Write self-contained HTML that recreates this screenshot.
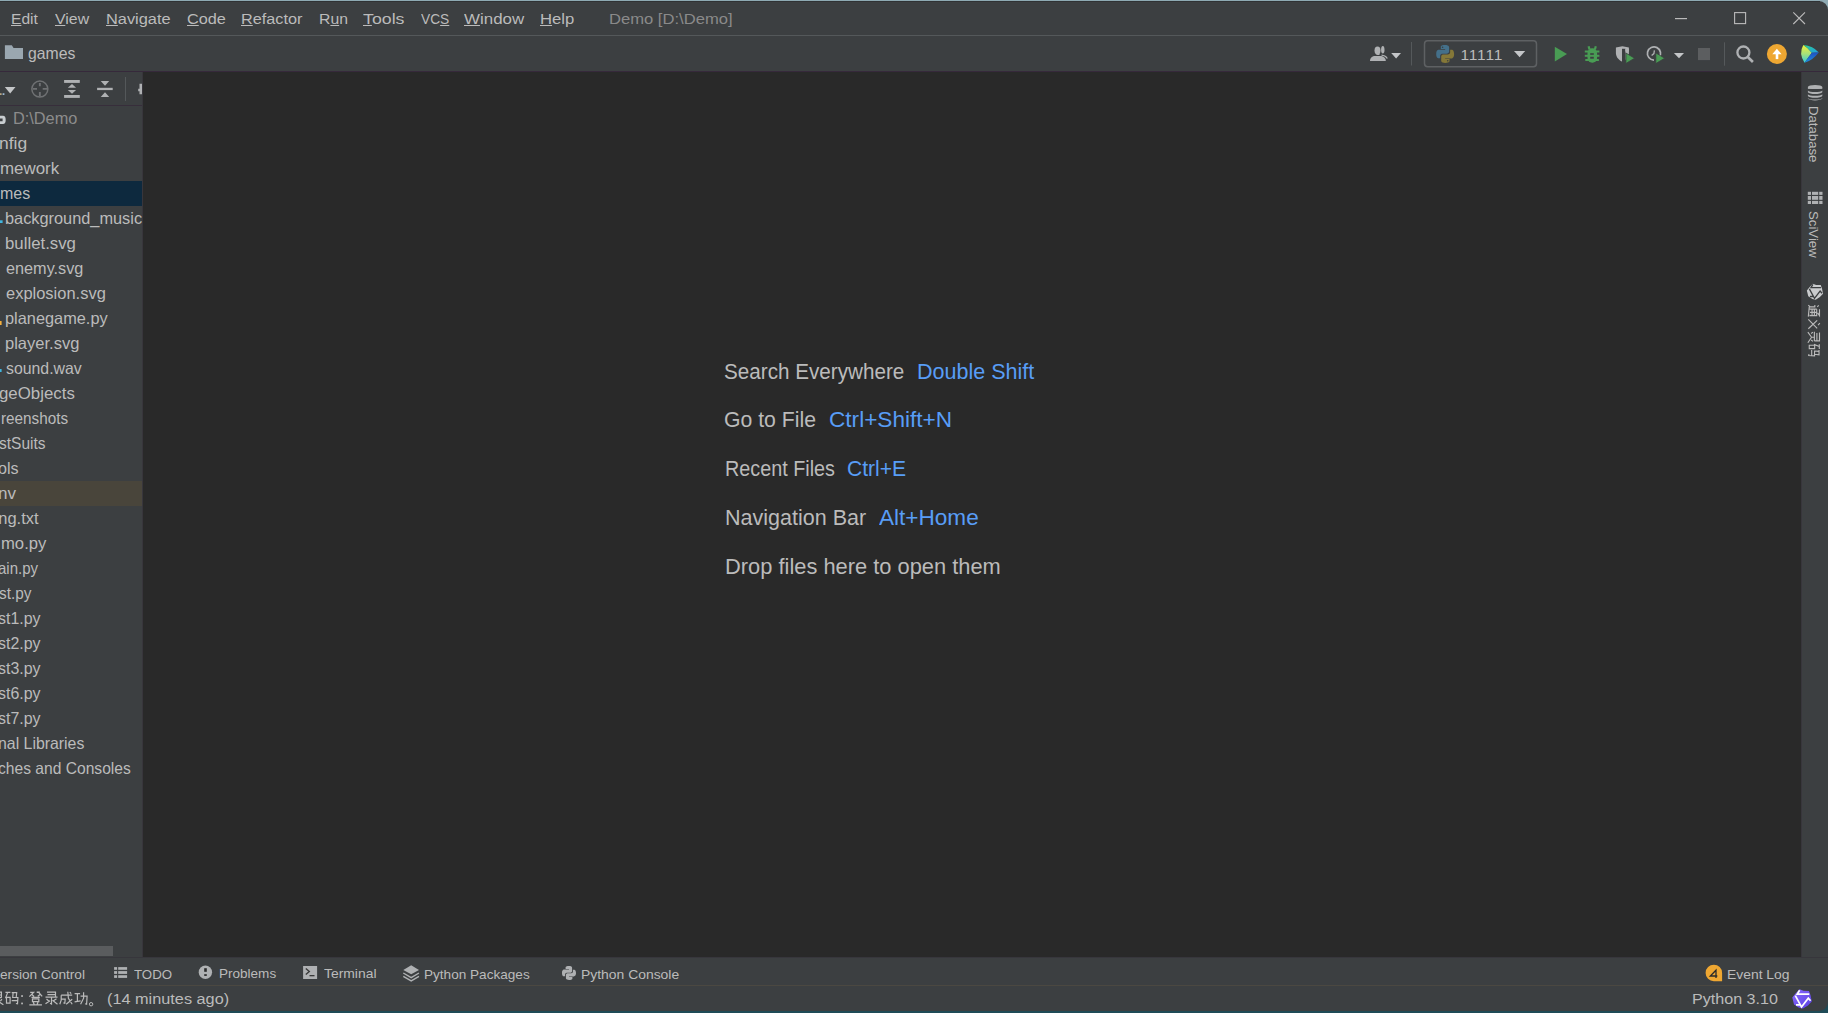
<!DOCTYPE html>
<html><head><meta charset="utf-8"><style>
html,body{margin:0;padding:0;width:1828px;height:1013px;overflow:hidden;background:#3C3F41;}
.r{position:absolute;}
.t{position:absolute;white-space:pre;font-family:"Liberation Sans", sans-serif;transform-origin:0 0;}
u{text-decoration:underline;text-underline-offset:1px;}
</style></head><body>
<div class="r" style="left:0px;top:0px;width:1828px;height:1013px;background:linear-gradient(#8EAAB3 0,#8EAAB3 50%,#1F4B57 50%,#1F4B57 100%);"></div>
<div class="r" style="left:0px;top:1px;width:1828px;height:1010px;background:#3C3F41;border-top-right-radius:9px;border-bottom-right-radius:9px;"></div>
<div class="r" style="left:0px;top:1011px;width:1828px;height:2px;background:#1F4B57;"></div>
<div class="r" style="left:0px;top:1px;width:1820px;height:1px;background:#303234;"></div>
<div class="r" style="left:0px;top:35px;width:1828px;height:1px;background:#54585A;"></div>
<div class="r" style="left:0px;top:71px;width:1828px;height:1px;background:#36293B;"></div>
<div class="r" style="left:143px;top:72px;width:1658px;height:885px;background:#292929;"></div>
<div class="r" style="left:142px;top:72px;width:1px;height:885px;background:#38363C;"></div>
<div class="r" style="left:1801px;top:72px;width:1px;height:885px;background:#38363C;"></div>
<div class="r" style="left:0px;top:105px;width:142px;height:1px;background:#372E3B;"></div>
<div class="r" style="left:125px;top:77px;width:1px;height:24px;background:#54585A;"></div>
<div class="r" style="left:0px;top:181px;width:142px;height:25px;background:#0D293E;"></div>
<div class="r" style="left:0px;top:481px;width:142px;height:25px;background:#49453B;"></div>
<div class="r" style="left:0px;top:946px;width:113px;height:10px;background:#5A5C5E;"></div>
<div class="r" style="left:0px;top:957px;width:1828px;height:1px;background:#37363C;"></div>
<div class="r" style="left:0px;top:985px;width:1828px;height:1px;background:#4B4841;"></div>
<svg class="r" style="left:0;top:0" width="1828" height="1013" viewBox="0 0 1828 1013"><ellipse cx="1377.5" cy="50.5" rx="3" ry="4.1" fill="#AFB1B3"/><path d="M1370 61 C1370 57.5 1372.5 56 1375 56 H1380 C1383 56 1385.8 57.5 1385.8 61 Z" fill="#AFB1B3"/><path d="M1375.5 55 L1379.5 55 L1379.5 53 Z" fill="#AFB1B3"/><ellipse cx="1382.8" cy="49.8" rx="1.7" ry="3.8" fill="#AFB1B3"/><path d="M1381.5 54.5 C1384 55 1387.5 56 1387.8 58.5 L1386.3 58.5 C1385.5 56.8 1383.5 56.2 1381.5 55.8 Z" fill="#AFB1B3"/><path d="M1391.2 53 H1401 L1396.1 58.4 Z" fill="#C4C6C8"/><rect x="1411" y="42" width="1" height="23.5" fill="#55595B"/><rect x="1724" y="42.3" width="1" height="23.4" fill="#55595B"/><rect x="1424.5" y="40.8" width="112" height="26" rx="3.2" fill="none" stroke="#5E6163" stroke-width="1.5"/><g transform="translate(1436.2 45.1) scale(1.28)"><path d="M6.9 0 C3.4 0 3.6 1.5 3.6 1.5 V3.1 H7 V3.6 H2.2 C2.2 3.6 0 3.4 0 6.9 C0 10.4 1.9 10.3 1.9 10.3 H3.1 V8.6 C3.1 8.6 3 6.7 5 6.7 H8.3 C8.3 6.7 10.1 6.7 10.1 4.9 V1.9 C10.1 1.9 10.4 0 6.9 0Z" fill="#44708A"/><circle cx="5" cy="1.7" r="0.6" fill="#3C3F41"/><g transform="rotate(180 7 7)"><path d="M6.9 0 C3.4 0 3.6 1.5 3.6 1.5 V3.1 H7 V3.6 H2.2 C2.2 3.6 0 3.4 0 6.9 C0 10.4 1.9 10.3 1.9 10.3 H3.1 V8.6 C3.1 8.6 3 6.7 5 6.7 H8.3 C8.3 6.7 10.1 6.7 10.1 4.9 V1.9 C10.1 1.9 10.4 0 6.9 0Z" fill="#857838"/><circle cx="5" cy="1.7" r="0.6" fill="#3C3F41"/></g></g><path d="M1514 51 H1525.2 L1519.6 57.3 Z" fill="#C4C6C8"/><path d="M1554.8 46.8 L1567 54.1 L1554.8 61.4 Z" fill="#499C54"/><g fill="#499C54" stroke="none"><rect x="1587.5" y="48.3" width="9.6" height="14.4" rx="4.6"/><rect x="1584.8" y="50.5" width="14.6" height="2"/><rect x="1584.8" y="54.8" width="14.6" height="2"/><rect x="1585.3" y="59" width="13.6" height="2"/></g><path d="M1589.5 49.5 L1588.6 46.2 M1594.9 49.5 L1595.8 46.2" stroke="#499C54" stroke-width="2.2"/><rect x="1590.2" y="53.2" width="3.6" height="1.6" fill="#3C3F41"/><rect x="1590.2" y="56.8" width="3.6" height="1.9" fill="#3C3F41"/><path d="M1615.9 47.5 L1622.4 46.3 L1628.9 47.5 V53 C1628.9 57.5 1625.5 60.5 1622.4 61.7 C1619.3 60.5 1615.9 57.5 1615.9 53 Z" fill="#AFB1B3"/><path d="M1622 48.8 H1625.5 V62 H1622 Z" fill="#3C3F41"/><path d="M1625.3 49 H1628.9 V51.6 H1625.3Z" fill="#AFB1B3"/><path d="M1625.9 53 L1634.6 58.2 L1625.9 63.5 Z" fill="#499C54" stroke="#3C3F41" stroke-width="0.8"/><path d="M1659 57.8 A6.6 6.6 0 1 0 1654 60.1" fill="none" stroke="#AFB1B3" stroke-width="1.7"/><path d="M1654.4 50.3 L1653.9 53.6 L1651.6 55.6" fill="none" stroke="#AFB1B3" stroke-width="1.3"/><path d="M1655.8 52.9 L1664.7 58.2 L1655.8 63.6 Z" fill="#499C54" stroke="#3C3F41" stroke-width="0.8"/><path d="M1673.9 53 H1684 L1679 58.2 Z" fill="#C4C6C8"/><rect x="1698" y="48" width="12" height="12.1" fill="#5C5E60"/><circle cx="1743.4" cy="52.5" r="6" fill="none" stroke="#AFB1B3" stroke-width="2.3"/><path d="M1747.6 56.8 L1752.9 62" stroke="#AFB1B3" stroke-width="2.6"/><circle cx="1776.9" cy="54" r="10" fill="#EEA732"/><path d="M1772.3 54.3 L1776.9 48.7 L1781.6 54.3 Z" fill="#FFFFFF"/><rect x="1775.7" y="54" width="2.6" height="5.1" fill="#FFFFFF"/><defs><linearGradient id="gl" x1="0" y1="0" x2="0" y2="1"><stop offset="0" stop-color="#F0F038"/><stop offset="0.5" stop-color="#A6E07A"/><stop offset="1" stop-color="#2FCDE0"/></linearGradient><linearGradient id="gt" x1="0" y1="0" x2="1" y2="1"><stop offset="0" stop-color="#2ED38A"/><stop offset="1" stop-color="#1E9BE8"/></linearGradient><linearGradient id="gb" x1="0" y1="0" x2="0" y2="1"><stop offset="0" stop-color="#2050C0"/><stop offset="1" stop-color="#1C8FE0"/></linearGradient><linearGradient id="gp" x1="0" y1="0" x2="1" y2="1"><stop offset="0" stop-color="#8A6BFF"/><stop offset="1" stop-color="#5A3FE0"/></linearGradient></defs><g transform="translate(1798 40)"><path d="M5.3 5 Q0.4 13.5 6.5 22.8 Q10.5 17 13.8 12.8 Q10.5 8 5.3 5Z" fill="url(#gl)"/><path d="M5.3 5 Q15 5.6 20.8 12.6 L13.8 12.8 Q10.5 8 5.3 5Z" fill="url(#gt)"/><path d="M20.8 12.6 Q14 21.1 6.5 22.8 Q10.5 17 13.8 12.8Z" fill="url(#gb)"/></g><rect x="1675" y="18" width="12" height="1.2" fill="#BBBBBB"/><rect x="1734.6" y="12.6" width="11" height="11" fill="none" stroke="#BBBBBB" stroke-width="1.1"/><path d="M1793.3 12.3 L1805 24 M1805 12.3 L1793.3 24" stroke="#BBBBBB" stroke-width="1.1"/><path d="M4.9 45.2 H11.8 L13.6 47.9 H23 V59.1 H4.9 Z" fill="#9AA7B0"/><rect x="0" y="93.3" width="1.6" height="1.6" fill="#C9B48A"/><rect x="2.6" y="93.3" width="1.8" height="1.6" fill="#A9C6E0"/><path d="M4.8 87 H15.5 L10.15 93.4 Z" fill="#C4C6C8"/><circle cx="39.85" cy="89.1" r="8" fill="none" stroke="#6F7173" stroke-width="1.5"/><path d="M39.85 82.9 V86.3 M39.85 91.9 V96.5 M32.9 88.9 H37 M42.7 88.9 H48" stroke="#6F7173" stroke-width="1.9"/><g fill="#AFB1B3"><rect x="64.1" y="80" width="15.7" height="2.9"/><rect x="64.1" y="95" width="15.7" height="2.9"/><path d="M67.8 87.8 L72 84.1 L76.1 87.8Z"/><path d="M67.8 89.9 H76.1 L72 93.8Z"/><path d="M100.7 80.9 H109.2 L105 85.8Z"/><rect x="97.1" y="87.8" width="15.6" height="2.3"/><path d="M100.7 97 H109.2 L105 92.2Z"/></g><path d="M139.5 83.8 H142 V94.2 H139.5 V91.2 H138.2 V88.8 H139.5 Z" fill="#AFB1B3"/><path d="M0 115.8 H3 A2.7 4.1 0 0 1 3 124 H0 V121.3 H2.6 V118.4 H0 Z" fill="#C8CDD0"/><rect x="0" y="220.3" width="2.6" height="2.7" fill="#40B6E0"/><rect x="0" y="321" width="1.6" height="4" fill="#F4AF3D"/><rect x="0" y="369" width="1.6" height="3" fill="#40B6E0"/><g fill="#AFB1B3"><ellipse cx="1815.1" cy="87" rx="7.2" ry="2"/><rect x="1807.9" y="87" width="14.4" height="1.9" /><path d="M1807.9 90.4 C1809 92.6 1821 92.6 1822.3 90.4 V92.2 C1821 94.6 1809 94.6 1807.9 92.2Z"/><path d="M1807.9 94.2 C1809 96.4 1821 96.4 1822.3 94.2 V96 C1821 98.4 1809 98.4 1807.9 96Z"/><path d="M1807.9 97.9 C1809 100.1 1821 100.1 1822.3 97.9 V98.6 C1821 101 1809 101 1807.9 98.6Z"/></g><g fill="#AFB1B3"><rect x="1807.8" y="191.8" width="3.2" height="3.1"/><rect x="1812" y="191.8" width="6.2" height="3.1"/><rect x="1819.2" y="191.8" width="3.3" height="3.1"/><rect x="1807.8" y="196" width="3.2" height="3.8"/><rect x="1812" y="196" width="6.2" height="3.8"/><rect x="1819.2" y="196" width="3.3" height="3.8"/><rect x="1807.8" y="200.9" width="3.2" height="3.1"/><rect x="1812" y="200.9" width="6.2" height="3.1"/><rect x="1819.2" y="200.9" width="3.3" height="3.1"/></g><g fill="#AFB1B3"><rect x="114.1" y="967.1" width="3" height="2.7"/><rect x="118.2" y="967.1" width="8.9" height="2.7"/><rect x="114.1" y="971.1" width="3" height="2.8"/><rect x="118.2" y="971.1" width="8.9" height="2.8"/><rect x="114.1" y="975.2" width="3" height="2.7"/><rect x="118.2" y="975.2" width="8.9" height="2.7"/></g><circle cx="205.4" cy="972.3" r="6.7" fill="#AFB1B3"/><rect x="204.2" y="968.2" width="2.6" height="3.6" fill="#2B2B2B"/><rect x="204.2" y="974.2" width="2.6" height="1.7" fill="#2B2B2B"/><rect x="303.1" y="966" width="14" height="13" fill="#AFB1B3"/><path d="M305.8 968.5 L309.3 971.5 L305.8 974.5" fill="none" stroke="#3A3A3A" stroke-width="1.4"/><rect x="309.5" y="975" width="5" height="1.3" fill="#3A3A3A"/><path d="M403.3 970 L411.2 965.3 L419 970 L411.2 974.3 Z" fill="#AFB1B3"/><path d="M403.3 973 L411.2 977.6 L419 973" fill="none" stroke="#AFB1B3" stroke-width="1.4"/><path d="M403.3 976.4 L411.2 980.9 L419 976.4" fill="none" stroke="#AFB1B3" stroke-width="1.4"/><g transform="translate(562 966) scale(1.0)"><path d="M6.9 0 C3.4 0 3.6 1.5 3.6 1.5 V3.1 H7 V3.6 H2.2 C2.2 3.6 0 3.4 0 6.9 C0 10.4 1.9 10.3 1.9 10.3 H3.1 V8.6 C3.1 8.6 3 6.7 5 6.7 H8.3 C8.3 6.7 10.1 6.7 10.1 4.9 V1.9 C10.1 1.9 10.4 0 6.9 0Z" fill="#AFB1B3"/><g transform="rotate(180 7 7)"><path d="M6.9 0 C3.4 0 3.6 1.5 3.6 1.5 V3.1 H7 V3.6 H2.2 C2.2 3.6 0 3.4 0 6.9 C0 10.4 1.9 10.3 1.9 10.3 H3.1 V8.6 C3.1 8.6 3 6.7 5 6.7 H8.3 C8.3 6.7 10.1 6.7 10.1 4.9 V1.9 C10.1 1.9 10.4 0 6.9 0Z" fill="#AFB1B3"/></g></g><path d="M1722.1 972.95 A8.25 8.25 0 1 0 1713.85 981.2 H1722.1 Z" fill="#EFA732"/><path d="M1716 978 V970.2 L1710.3 976 H1717.3" fill="none" stroke="#2B2B2B" stroke-width="1.3"/><g transform="translate(1792 989)"><path d="M7.5 0.3 L11.5 1.8 L17 2 L18.6 6.5 L19.8 12.5 L16 16.5 L11 19.6 L7 18.8 L2 15.5 L0.3 8.5 L3.5 4.5 Z" fill="url(#gp)"/><path d="M7.6 1.2 L5.3 5.1 H17.3 M3.3 6.6 L9.5 18 L16.3 9.2 L18.6 11.8 M4 15.8 H8.8" fill="none" stroke="#FFFFFF" stroke-width="1.7"/></g><g transform="translate(1806.6 283.4) scale(0.83)"><path d="M7.5 0.3 L11.5 1.8 L17 2 L18.6 6.5 L19.8 12.5 L16 16.5 L11 19.6 L7 18.8 L2 15.5 L0.3 8.5 L3.5 4.5 Z" fill="#C9CBCD"/><path d="M7.6 1.2 L5.3 5.1 H17.3 M3.3 6.6 L9.5 18 L16.3 9.2 L18.6 11.8 M4 15.8 H8.8" fill="none" stroke="#3C3F41" stroke-width="1.6"/></g></svg>
<svg class="r" style="left:0;top:985px" width="110" height="26" viewBox="0 985 110 26"><path transform="translate(-9.6 991.2)" d="M2 1H11V6.5M2.5 3.8H11M1 6.5H11M1.5 8L3 10M11.5 8L10 10M7 7V9.5L1.5 13.5M7 9.5L13 13.5" fill="none" stroke="#BBBBBB" stroke-width="1.2"/><path transform="translate(4.9 991.2)" d="M0.5 1.2H5.5M2.8 1.2L0.6 7M1.6 6.2H5.2V12H1.6ZM6.8 1.5H11.8L11.3 6.3M8.2 1.5L7.8 6.3H13L12.6 12.6L11 12.3M6.8 9.4H12.4" fill="none" stroke="#BBBBBB" stroke-width="1.2"/><rect x="21.2" y="995.2" width="1.7" height="1.7" fill="#BBBBBB"/><rect x="21.2" y="1002.6" width="1.7" height="1.7" fill="#BBBBBB"/><path transform="translate(28.3 991.2) scale(1.05)" d="M1.8 1.2H5L1 5.2M3.2 3L5.5 5M8 1H11M9.5 0.6L13.2 5M11.5 2.8L9 4.8M3 5.8H11M4 7.2H10V10H4ZM1 13H13M4.8 10.6L5.6 12.6M9.2 10.6L8.4 12.6" fill="none" stroke="#BBBBBB" stroke-width="1.2"/><path transform="translate(44.5 991.2)" d="M2.5 1H11V6M3 3.5H11M1 6H13M7 6V12.8L5.5 12M2 7.8L4.5 10M12 7.5L9 9.5M1 12.5L5.5 9.5M8 9L13 13" fill="none" stroke="#BBBBBB" stroke-width="1.2"/><path transform="translate(59.2 991.2)" d="M2 4H13M2 4V9L0.6 13M2 8H6L5.6 12L4.2 11.6M8.6 0.6L9.2 7L13 13M13 8L7 13M10.6 1L12 2.4" fill="none" stroke="#BBBBBB" stroke-width="1.2"/><path transform="translate(74.1 991.2)" d="M0.5 2.5H6M3.3 2.5V10M0.5 10.6L6.5 9.6M6.5 5H13L12.5 13L11 12.5M9.5 1V7L6.5 13" fill="none" stroke="#BBBBBB" stroke-width="1.2"/><circle cx="91.1" cy="1004.2" r="1.7" fill="none" stroke="#BBBBBB" stroke-width="1"/></svg>
<svg class="r" style="left:1800px;top:300px" width="28" height="62" viewBox="1800 300 28 62"><path transform="translate(1807.4 304.5) scale(0.93) rotate(90 7 7)" d="M1 1.8L2.6 3.4M0.5 6H2.6V11L0.6 13M2.6 12L13 13M5 1H12L9 3M5 4H12V11.2H11M5 4V11.6M5 6.5H12M5 9H12M8.5 4V11.2" fill="none" stroke="#BBBBBB" stroke-width="1.2"/><path transform="translate(1807.4 317.6) scale(0.93) rotate(90 7 7)" d="M6 0.6L8 2.5M3 3.5L12 13M11.5 3.5L2 13" fill="none" stroke="#BBBBBB" stroke-width="1.2"/><path transform="translate(1807.4 330.7) scale(0.93) rotate(90 7 7)" d="M2 1H11V6.5M2.5 3.8H11M1 6.5H11M1.5 8L3 10M11.5 8L10 10M7 7V9.5L1.5 13.5M7 9.5L13 13.5" fill="none" stroke="#BBBBBB" stroke-width="1.2"/><path transform="translate(1807.4 343.8) scale(0.93) rotate(90 7 7)" d="M0.5 1.2H5.5M2.8 1.2L0.6 7M1.6 6.2H5.2V12H1.6ZM6.8 1.5H11.8L11.3 6.3M8.2 1.5L7.8 6.3H13L12.6 12.6L11 12.3M6.8 9.4H12.4" fill="none" stroke="#BBBBBB" stroke-width="1.2"/></svg>
<div id="texts"><div class="r" id="treebox" style="left:0;top:0;width:142px;height:957px;overflow:hidden">
<div class="t" id="tr0" style="left:12.77px;top:110.03px;font-size:16.5px;line-height:16.5px;color:#8C8C8C;transform:scaleX(0.9878);">D:\Demo</div>
<div class="t" id="tr1" style="left:-0.85px;top:135.03px;font-size:16.5px;line-height:16.5px;color:#BBBBBB;transform:scaleX(1.0576);">nfig</div>
<div class="t" id="tr2" style="left:0.07px;top:160.03px;font-size:16.5px;line-height:16.5px;color:#BBBBBB;transform:scaleX(1.0251);">mework</div>
<div class="t" id="tr3" style="left:0.04px;top:185.03px;font-size:16.5px;line-height:16.5px;color:#BBBBBB;transform:scaleX(0.9691);">mes</div>
<div class="t" id="tr4" style="left:5.38px;top:210.03px;font-size:16.5px;line-height:16.5px;color:#BBBBBB;transform:scaleX(0.9898);">background_music</div>
<div class="t" id="tr5" style="left:5.34px;top:235.03px;font-size:16.5px;line-height:16.5px;color:#BBBBBB;transform:scaleX(1.0179);">bullet.svg</div>
<div class="t" id="tr6" style="left:5.61px;top:260.03px;font-size:16.5px;line-height:16.5px;color:#BBBBBB;transform:scaleX(0.9849);">enemy.svg</div>
<div class="t" id="tr7" style="left:5.61px;top:285.03px;font-size:16.5px;line-height:16.5px;color:#BBBBBB;transform:scaleX(0.9981);">explosion.svg</div>
<div class="t" id="tr8" style="left:4.60px;top:310.03px;font-size:16.5px;line-height:16.5px;color:#BBBBBB;transform:scaleX(0.9905);">planegame.py</div>
<div class="t" id="tr9" style="left:4.57px;top:335.03px;font-size:16.5px;line-height:16.5px;color:#BBBBBB;transform:scaleX(1.0004);">player.svg</div>
<div class="t" id="tr10" style="left:5.62px;top:360.03px;font-size:16.5px;line-height:16.5px;color:#BBBBBB;transform:scaleX(0.9598);">sound.wav</div>
<div class="t" id="tr11" style="left:-1.49px;top:385.03px;font-size:16.5px;line-height:16.5px;color:#BBBBBB;transform:scaleX(1.0203);">geObjects</div>
<div class="t" id="tr12" style="left:1.27px;top:410.03px;font-size:16.5px;line-height:16.5px;color:#BBBBBB;transform:scaleX(0.9253);">reenshots</div>
<div class="t" id="tr13" style="left:-1.03px;top:435.03px;font-size:16.5px;line-height:16.5px;color:#BBBBBB;transform:scaleX(0.9390);">stSuits</div>
<div class="t" id="tr14" style="left:-1.94px;top:460.03px;font-size:16.5px;line-height:16.5px;color:#BBBBBB;transform:scaleX(0.9764);">ols</div>
<div class="t" id="tr15" style="left:-2.41px;top:485.03px;font-size:16.5px;line-height:16.5px;color:#BBBBBB;transform:scaleX(1.0352);">nv</div>
<div class="t" id="tr16" style="left:-1.77px;top:510.03px;font-size:16.5px;line-height:16.5px;color:#BBBBBB;">ng.txt</div>
<div class="t" id="tr17" style="left:1.28px;top:535.03px;font-size:16.5px;line-height:16.5px;color:#BBBBBB;transform:scaleX(1.0094);">mo.py</div>
<div class="t" id="tr18" style="left:-1.52px;top:560.03px;font-size:16.5px;line-height:16.5px;color:#BBBBBB;transform:scaleX(0.9091);">ain.py</div>
<div class="t" id="tr19" style="left:-1.42px;top:585.03px;font-size:16.5px;line-height:16.5px;color:#BBBBBB;transform:scaleX(0.9287);">st.py</div>
<div class="t" id="tr20" style="left:-1.58px;top:610.03px;font-size:16.5px;line-height:16.5px;color:#BBBBBB;transform:scaleX(0.9661);">st1.py</div>
<div class="t" id="tr21" style="left:-1.58px;top:635.03px;font-size:16.5px;line-height:16.5px;color:#BBBBBB;transform:scaleX(0.9661);">st2.py</div>
<div class="t" id="tr22" style="left:-1.58px;top:660.03px;font-size:16.5px;line-height:16.5px;color:#BBBBBB;transform:scaleX(0.9661);">st3.py</div>
<div class="t" id="tr23" style="left:-1.58px;top:685.03px;font-size:16.5px;line-height:16.5px;color:#BBBBBB;transform:scaleX(0.9661);">st6.py</div>
<div class="t" id="tr24" style="left:-1.58px;top:710.03px;font-size:16.5px;line-height:16.5px;color:#BBBBBB;transform:scaleX(0.9661);">st7.py</div>
<div class="t" id="tr25" style="left:-2.36px;top:735.03px;font-size:16.5px;line-height:16.5px;color:#BBBBBB;transform:scaleX(0.9608);">nal Libraries</div>
<div class="t" id="tr26" style="left:-1.67px;top:760.03px;font-size:16.5px;line-height:16.5px;color:#BBBBBB;transform:scaleX(0.9465);">ches and Consoles</div>
</div>
<div class="t" id="m0" style="left:11.27px;top:10.88px;font-size:15.5px;line-height:15.5px;color:#BBBBBB;transform:scaleX(1.0040);"><u>E</u>dit</div>
<div class="t" id="m1" style="left:54.78px;top:10.88px;font-size:15.5px;line-height:15.5px;color:#BBBBBB;transform:scaleX(1.0246);"><u>V</u>iew</div>
<div class="t" id="m2" style="left:106.19px;top:10.88px;font-size:15.5px;line-height:15.5px;color:#BBBBBB;transform:scaleX(1.0562);"><u>N</u>avigate</div>
<div class="t" id="m3" style="left:187.07px;top:10.88px;font-size:15.5px;line-height:15.5px;color:#BBBBBB;transform:scaleX(1.0495);"><u>C</u>ode</div>
<div class="t" id="m4" style="left:241.32px;top:10.88px;font-size:15.5px;line-height:15.5px;color:#BBBBBB;transform:scaleX(1.0479);"><u>R</u>efactor</div>
<div class="t" id="m5" style="left:319.24px;top:10.88px;font-size:15.5px;line-height:15.5px;color:#BBBBBB;transform:scaleX(1.0162);">R<u>u</u>n</div>
<div class="t" id="m6" style="left:363.22px;top:10.88px;font-size:15.5px;line-height:15.5px;color:#BBBBBB;transform:scaleX(1.1457);"><u>T</u>ools</div>
<div class="t" id="m7" style="left:420.80px;top:10.88px;font-size:15.5px;line-height:15.5px;color:#BBBBBB;transform:scaleX(0.8864);">VC<u>S</u></div>
<div class="t" id="m8" style="left:464.37px;top:10.88px;font-size:15.5px;line-height:15.5px;color:#BBBBBB;transform:scaleX(1.0909);"><u>W</u>indow</div>
<div class="t" id="m9" style="left:540.19px;top:10.88px;font-size:15.5px;line-height:15.5px;color:#BBBBBB;transform:scaleX(1.0766);"><u>H</u>elp</div>
<div class="t" id="title" style="left:609.01px;top:10.88px;font-size:15.5px;line-height:15.5px;color:#8A8A8A;transform:scaleX(1.0703);">Demo [D:\Demo]</div>
<div class="t" id="games" style="left:27.82px;top:44.93px;font-size:16.5px;line-height:16.5px;color:#BBBBBB;transform:scaleX(0.9559);">games</div>
<div class="t" id="run" style="left:1460.39px;top:46.78px;font-size:15.5px;line-height:15.5px;color:#BBBBBB;letter-spacing:0.9px;">11111</div>
<div class="t" id="w0a" style="left:724.40px;top:361.70px;font-size:21.5px;line-height:21.5px;color:#BBBBBB;transform:scaleX(0.9612);">Search Everywhere</div>
<div class="t" id="w0b" style="left:917.42px;top:361.70px;font-size:21.5px;line-height:21.5px;color:#589DF6;transform:scaleX(1.0013);">Double Shift</div>
<div class="t" id="w1a" style="left:724.41px;top:410.40px;font-size:21.5px;line-height:21.5px;color:#BBBBBB;transform:scaleX(0.9875);">Go to File</div>
<div class="t" id="w1b" style="left:828.95px;top:410.40px;font-size:21.5px;line-height:21.5px;color:#589DF6;transform:scaleX(1.0515);">Ctrl+Shift+N</div>
<div class="t" id="w2a" style="left:725.21px;top:459.40px;font-size:21.5px;line-height:21.5px;color:#BBBBBB;transform:scaleX(0.9204);">Recent Files</div>
<div class="t" id="w2b" style="left:846.65px;top:459.40px;font-size:21.5px;line-height:21.5px;color:#589DF6;transform:scaleX(0.9806);">Ctrl+E</div>
<div class="t" id="w3a" style="left:725.15px;top:507.60px;font-size:21.5px;line-height:21.5px;color:#BBBBBB;transform:scaleX(1.0011);">Navigation Bar</div>
<div class="t" id="w3b" style="left:878.84px;top:507.60px;font-size:21.5px;line-height:21.5px;color:#589DF6;transform:scaleX(1.0497);">Alt+Home</div>
<div class="t" id="w4a" style="left:725.14px;top:556.90px;font-size:21.5px;line-height:21.5px;color:#BBBBBB;transform:scaleX(1.0167);">Drop files here to open them</div>
<div class="t" id="vc" style="left:0.19px;top:967.63px;font-size:13.2px;line-height:13.2px;color:#BBBBBB;transform:scaleX(1.0348);">ersion Control</div>
<div class="t" id="todo" style="left:134.42px;top:967.63px;font-size:13.2px;line-height:13.2px;color:#BBBBBB;transform:scaleX(1.0065);">TODO</div>
<div class="t" id="prob" style="left:218.67px;top:967.43px;font-size:13.2px;line-height:13.2px;color:#BBBBBB;transform:scaleX(1.0260);">Problems</div>
<div class="t" id="term" style="left:324.03px;top:967.43px;font-size:13.2px;line-height:13.2px;color:#BBBBBB;transform:scaleX(1.0529);">Terminal</div>
<div class="t" id="pkgs" style="left:423.98px;top:967.63px;font-size:13.2px;line-height:13.2px;color:#BBBBBB;transform:scaleX(1.0296);">Python Packages</div>
<div class="t" id="cons" style="left:580.96px;top:967.63px;font-size:13.2px;line-height:13.2px;color:#BBBBBB;transform:scaleX(1.0542);">Python Console</div>
<div class="t" id="elog" style="left:1726.57px;top:968.13px;font-size:13.2px;line-height:13.2px;color:#BBBBBB;transform:scaleX(1.0523);">Event Log</div>
<div class="t" id="ago" style="left:106.62px;top:990.63px;font-size:15.2px;line-height:15.2px;color:#BBBBBB;transform:scaleX(1.0716);">(14 minutes ago)</div>
<div class="t" id="py" style="left:1692.30px;top:990.73px;font-size:15.2px;line-height:15.2px;color:#BBBBBB;transform:scaleX(1.0602);">Python 3.10</div>
</div><div class="t" style="left:1820.17px;top:106.00px;font-size:13.2px;line-height:13.2px;color:#BBBBBB;transform:rotate(90deg);">Database</div>
<div class="t" style="left:1820.17px;top:210.60px;font-size:13.2px;line-height:13.2px;color:#BBBBBB;transform:rotate(90deg);">SciView</div>

</body></html>
